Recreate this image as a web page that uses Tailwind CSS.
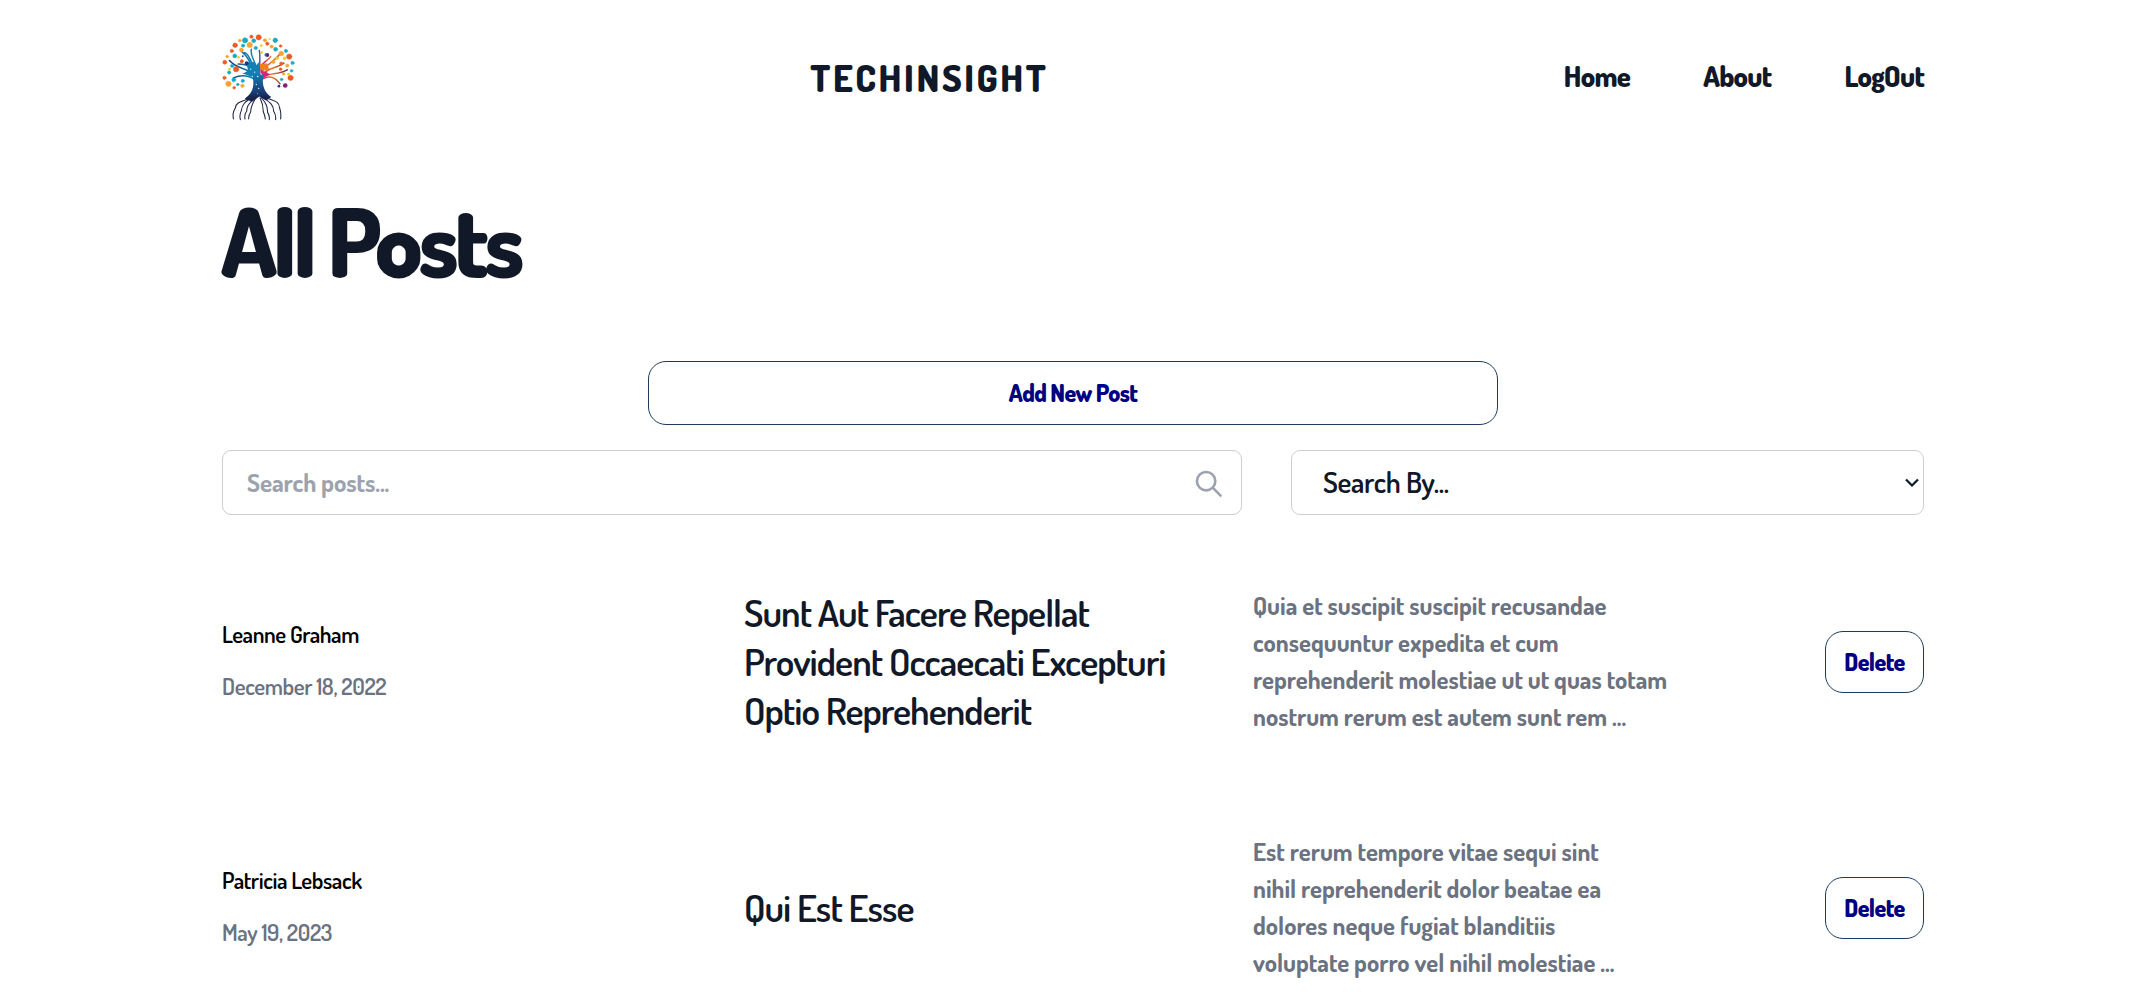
<!DOCTYPE html>
<html lang="en">
<head>
<meta charset="utf-8">
<title>TechInsight</title>
<script src="https://cdn.jsdelivr.net/npm/@tailwindcss/browser@4"></script>
</head>
<body class="bg-white font-['Dosis','Open_Sans',sans-serif] text-[#111827] h-[1003px] overflow-hidden">
<div class="ml-[222px] w-[1702px]">
  <header class="flex h-[154px] items-center justify-between">
    <svg class="w-[73px] h-[87px]" viewBox="36 28 219 262" fill="none" stroke-linecap="round">
      <defs>
        <linearGradient id="trunk" x1="60" y1="0" x2="235" y2="0" gradientUnits="userSpaceOnUse">
          <stop offset="0" stop-color="#1b3f74"/><stop offset=".38" stop-color="#1287b8"/><stop offset=".5" stop-color="#1b6fa6"/><stop offset=".58" stop-color="#d2267d"/><stop offset=".72" stop-color="#ef7d1c"/><stop offset="1" stop-color="#3d2a6b"/>
        </linearGradient>
        <linearGradient id="base" x1="0" y1="150" x2="0" y2="235" gradientUnits="userSpaceOnUse">
          <stop offset="0" stop-color="#1479ae"/><stop offset=".6" stop-color="#1b3f78"/><stop offset="1" stop-color="#0d1133"/>
        </linearGradient>
      </defs>
      <g stroke="url(#trunk)">
        <path stroke-width="4.500" d="M140 165C128 132 118 100 96 82M130 130C112 120 95 118 84 118M132 152C112 128 82 136 58 108M134 165C112 150 88 152 70 160M138 125C130 100 120 92 124 74M128 118C118 105 118 90 104 84"/>
        <path stroke-width="4.500" d="M148 160C148 120 152 98 148 78M150 130C158 112 170 112 182 96M155 140C172 120 192 110 210 88M158 148C182 126 200 132 222 116M156 158C182 144 204 152 232 136M156 164C182 150 196 160 210 178"/>
      </g>
      <path fill="#147fb2" d="M104 112C122 118 132 104 139 122L146 112L152 164L136 178C132 158 112 150 96 148C114 140 120 138 104 112Z"/>
      <path fill="#cf2a79" d="M151 128L166 140L180 150L162 160L152 175Z"/>
      <path fill="#f07f1e" d="M149 118L170 116L177 132L163 143L150 132Z"/>
      <path fill="url(#base)" d="M127 150H160C155 180 162 204 184 218L168 228L148 216L126 232L104 222C130 206 134 182 127 150Z"/>
      <path stroke="#1f2448" stroke-width="3.200" d="M126 218C108 230 76 230 76 250C68 264 68 270 70 284M130 218C104 232 96 240 94 258C88 270 88 276 91 286M134 220C112 242 110 248 110 260C103 270 103 276 105 284M138 220C122 244 123 252 122 262C116 272 115 276 116 284M150 220C160 240 160 250 160 262C164 272 166 276 166 284M154 220C172 240 172 250 173 264C178 272 179 280 178 286M158 218C182 236 190 240 191 260C197 270 198 280 197 286M162 216C184 230 208 226 209 250C214 264 214 270 212 284"/>
      <g fill="#d9f2fb"><circle cx="122" cy="134" r="2"/><circle cx="134" cy="143" r="2"/><circle cx="143" cy="156" r="2.500"/><circle cx="127" cy="156" r="2"/><circle cx="139" cy="180" r="2"/><circle cx="146" cy="192" r="2"/><circle cx="165" cy="137" r="2"/><circle cx="154" cy="149" r="2"/><circle cx="143" cy="208" r="1.500"/></g>
      <g fill="#ef5a24" stroke="#ef5a24" stroke-width="1.500"><circle cx="146" cy="38" r="8"/><circle cx="75" cy="62" r="7"/><circle cx="65" cy="79" r="5"/><circle cx="238" cy="96" r="8"/><circle cx="242" cy="160" r="8"/><circle cx="78" cy="134" r="8"/><circle cx="172" cy="57" r="5"/><circle cx="44" cy="113" r="6"/><circle cx="43" cy="160" r="5"/><circle cx="95" cy="110" r="5"/><circle cx="214" cy="117" r="5"/><circle cx="124" cy="36" r="5"/><circle cx="212" cy="64" r="4"/><circle cx="72" cy="190" r="4"/><circle cx="212" cy="134" r="4"/></g>
      <g fill="#f9a12b" stroke="#f9a12b" stroke-width="1.500"><circle cx="119" cy="61" r="8"/><circle cx="55" cy="178" r="8"/><circle cx="214" cy="87" r="7"/><circle cx="165" cy="47" r="5"/><circle cx="185" cy="66" r="5"/><circle cx="94" cy="76" r="6"/><circle cx="51" cy="96" r="4"/><circle cx="232" cy="123" r="5"/><circle cx="97" cy="184" r="5"/><circle cx="89" cy="48" r="4"/><circle cx="190" cy="112" r="5"/><circle cx="221" cy="148" r="4"/></g>
      <g fill="#19a9c6" stroke="#19a9c6" stroke-width="1.500"><circle cx="105" cy="47" r="8"/><circle cx="196" cy="47" r="7"/><circle cx="197" cy="74" r="6"/><circle cx="131" cy="48" r="6"/><circle cx="74" cy="94" r="6"/><circle cx="66" cy="124" r="5"/><circle cx="99" cy="63" r="5"/><circle cx="248" cy="115" r="5"/><circle cx="228" cy="79" r="5"/><circle cx="57" cy="144" r="5"/><circle cx="71" cy="166" r="6"/><circle cx="98" cy="169" r="5"/><circle cx="168" cy="91" r="4"/><circle cx="245" cy="139" r="4"/><circle cx="137" cy="70" r="5"/><circle cx="83" cy="180" r="4"/><circle cx="215" cy="165" r="4"/></g>
      <g fill="#f4c62e"><circle cx="154" cy="63" r="4"/><circle cx="179" cy="43" r="3"/><circle cx="85" cy="98" r="4"/><circle cx="58" cy="134" r="4"/><circle cx="202" cy="101" r="5"/><circle cx="224" cy="101" r="5"/><circle cx="236" cy="149" r="4"/><circle cx="155" cy="84" r="4"/></g>
      <circle cx="172" cy="91" r="6" fill="#5a2b86"/><circle cx="226" cy="183" r="7" fill="#8a1d7c"/><circle cx="110" cy="116" r="6" fill="#173c74"/><circle cx="207" cy="185" r="4" fill="#3c2a78"/><circle cx="98" cy="95" r="3" fill="#1b5a9b"/>
    </svg>
    <div class="mt-[1px] text-[37px] leading-[48px] font-extrabold tracking-[0.070em]">TECHINSIGHT</div>
    <nav class="-mt-px flex gap-[73px] text-[28.400px] font-extrabold tracking-[-0.025em]"><a>Home</a><a>About</a><a>LogOut</a></nav>
  </header>

  <h1 class="mt-[27px] -ml-px h-[120px] text-[95.200px] leading-[120px] font-extrabold tracking-tighter">All Posts</h1>

  <button class="mt-[60px] ml-[426px] flex h-[64px] w-[850px] items-center justify-center rounded-[18px] border border-[#1c3b5e] pt-[2px] text-[23.800px] font-extrabold tracking-[-0.027em] text-[#000080]">Add New Post</button>

  <div class="mt-[25px] flex justify-between">
    <div class="flex h-[65px] w-[1020px] items-center justify-between rounded-[9px] border border-[#cdcfd2] pr-[17px] pl-[24px] text-[25px] font-bold tracking-[-0.005em] text-[#9ca3af]">
      <span class="mt-px">Search posts...</span>
      <svg class="mt-[2px] size-[31.500px]" viewBox="0 0 24 24" fill="none" stroke="currentColor" stroke-width="2" stroke-linecap="round" stroke-linejoin="round"><path d="M21 21l-6-6m2-5a7 7 0 11-14 0 7 7 0 0114 0z"/></svg>
    </div>
    <div class="flex h-[65px] w-[633px] items-center justify-between rounded-[9px] border border-[#cdcfd2] pr-[4px] pl-[31px] text-[29.200px] font-semibold tracking-[-0.012em]">
      <span class="-mt-[2px]">Search By...</span>
      <svg class="h-[10px] w-[14px]" viewBox="0 0 14 10" fill="none" stroke="currentColor" stroke-width="2.200"><path d="M1 1.500L7 7.500L13 1.500"/></svg>
    </div>
  </div>

  <main class="mt-[23px]">
    <article class="grid h-[246px] grid-cols-[523px_509px_1fr_auto] items-center">
      <div class="-mt-[3px] flex flex-col gap-[15px] text-[22.900px] leading-[37px] font-semibold tracking-[-0.018em]"><div class="text-black">Leanne Graham</div><div class="text-[#6b7280]">December 18, 2022</div></div>
      <h2 class="mt-px -ml-px text-[38.100px] leading-[49.280px] font-semibold tracking-tight">Sunt Aut Facere Repellat<br>Provident Occaecati Excepturi<br>Optio Reprehenderit</h2>
      <p class="-ml-px text-[24.660px] leading-[37px] font-bold text-[#6b7280]">Quia et suscipit suscipit recusandae<br>consequuntur expedita et cum<br>reprehenderit molestiae ut ut quas totam<br>nostrum rerum est autem sunt rem ...</p>
      <button class="mt-[2px] flex h-[62px] w-[99px] items-center justify-center rounded-[18px] border border-[#1c3b5e] pt-[2px] text-[23.800px] font-extrabold tracking-[-0.027em] text-[#000080]">Delete</button>
    </article>
    <article class="grid h-[246px] grid-cols-[523px_509px_1fr_auto] items-center">
      <div class="-mt-[3px] flex flex-col gap-[15px] text-[22.900px] leading-[37px] font-semibold tracking-[-0.018em]"><div class="text-black">Patricia Lebsack</div><div class="text-[#6b7280]">May 19, 2023</div></div>
      <h2 class="mt-px -ml-px text-[38.100px] leading-[49.280px] font-semibold tracking-tight">Qui Est Esse</h2>
      <p class="-ml-px text-[24.660px] leading-[37px] font-bold text-[#6b7280]">Est rerum tempore vitae sequi sint<br>nihil reprehenderit dolor beatae ea<br>dolores neque fugiat blanditiis<br>voluptate porro vel nihil molestiae ...</p>
      <button class="mt-[2px] flex h-[62px] w-[99px] items-center justify-center rounded-[18px] border border-[#1c3b5e] pt-[2px] text-[23.800px] font-extrabold tracking-[-0.027em] text-[#000080]">Delete</button>
    </article>
  </main>
</div>
</body>
</html>
